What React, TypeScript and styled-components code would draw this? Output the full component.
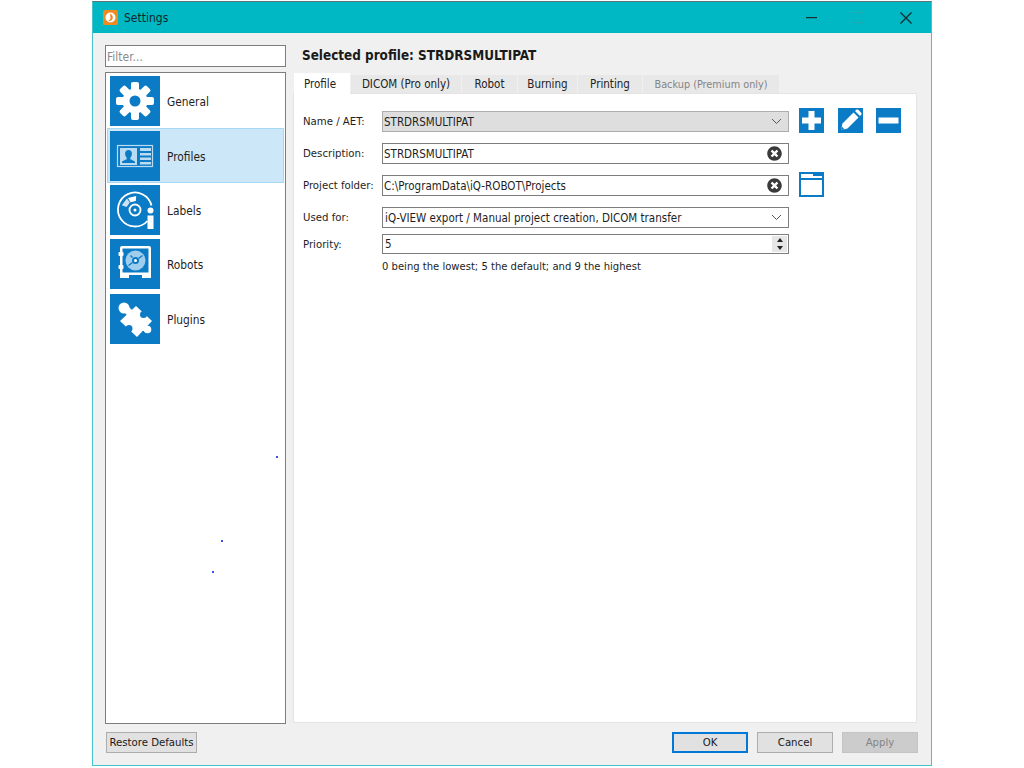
import styled, { createGlobalStyle } from "styled-components";
import { FaTimesCircle } from "react-icons/fa";
import type { ReactNode } from "react";

const GlobalStyle = createGlobalStyle`
  html, body {
    margin: 0;
    background: #ffffff;
  }
  body {
    font-family: "DejaVu Sans", "Liberation Sans", sans-serif;
    font-stretch: condensed;
    font-size: 11.3px;
    color: #1e1e1e;
    overflow: hidden;
  }
`

const Window = styled.div`
  display: flex;
  flex-direction: column;
  box-sizing: border-box;
  width: 840px;
  height: 765px;
  margin: 1px 0 0 92px;
  border: 1px solid #45c1ca;
  border-top-color: #5d7276;
  background: #f0f0f0;
`

const TitleBar = styled.div`
  display: flex;
  align-items: center;
  flex: none;
  height: 31px;
  padding: 0 1px 0 10px;
  background: #00b8c4;
`

const AppIcon = styled.svg`
  width: 15px;
  height: 15px;
  margin-right: 6px;
`

const Title = styled.span`
  flex: 1;
  font-size: 12px;
  color: #10282c;
`

const WinControl = styled.div`
  display: flex;
  align-items: center;
  justify-content: center;
  width: 47.5px;
  height: 31px;
`

const Body = styled.div`
  display: flex;
  flex-direction: column;
  flex: 1;
  min-height: 0;
  padding: 12px 13px 12px 12px;
`

const MainRow = styled.div`
  display: grid;
  grid-template-columns: 181px 1fr;
  column-gap: 7px;
  flex: 1;
  min-height: 0;
`

const Sidebar = styled.div`
  display: flex;
  flex-direction: column;
  gap: 5px;
  min-height: 0;
`

const FilterInput = styled.input`
  flex: none;
  box-sizing: border-box;
  width: 181px;
  height: 22px;
  padding: 1px 1px 0;
  border: 1px solid #7d7d7d;
  background: #fff;
  font: inherit;
  font-stretch: condensed;
  font-size: 12px;
  outline: none;

  &::placeholder {
    color: #8a8a8a;
    opacity: 1;
  }
`

const NavList = styled.div`
  position: relative;
  flex: 1;
  padding: 1px;
  border: 1px solid #7d7d7d;
  background: #fff;
`

const NavItem = styled.div<{ $selected?: boolean }>`
  display: flex;
  align-items: center;
  gap: 7px;
  box-sizing: border-box;
  height: 54.4px;
  padding-left: 2px;
  border: 1px solid ${(p) => (p.$selected ? "#a6d8f5" : "transparent")};
  background: ${(p) => (p.$selected ? "#cce8f8" : "transparent")};
  font-size: 11.8px;
`

const NavName = styled.span`
  margin-top: 2px;
`

const Tile = styled.div`
  display: flex;
  align-items: center;
  justify-content: center;
  flex: none;
  width: 50px;
  height: 50px;
  background: #0b7bc6;
  color: #fff;
`

const Speck = styled.span<{ $x: number; $y: number }>`
  position: absolute;
  left: ${(p) => p.$x}px;
  top: ${(p) => p.$y}px;
  width: 2px;
  height: 2px;
  background: #3d4fe0;
`

const Content = styled.div`
  display: flex;
  flex-direction: column;
  min-height: 0;
  padding: 0 1px 1px 0;
`

const Heading = styled.h2`
  flex: none;
  height: 28px;
  margin: 0;
  padding-left: 9px;
  font-size: 13.4px;
  font-weight: 700;
  line-height: 21px;
  color: #1a1a1a;
`

const TabBar = styled.div`
  display: flex;
  flex: none;
  align-items: flex-end;
  height: 20px;
  padding-left: 1px;
  gap: 1px;
`

const Tab = styled.div<{ $active?: boolean; $disabled?: boolean; $width: number }>`
  display: flex;
  align-items: center;
  justify-content: center;
  box-sizing: border-box;
  width: ${(p) => p.$width}px;
  height: ${(p) => (p.$active ? "21px" : "18px")};
  margin-bottom: ${(p) => (p.$active ? "-1px" : "0")};
  padding-right: ${(p) => (p.$active ? "4px" : "0")};
  background: ${(p) => (p.$active ? "#fff" : "#e8e8e8")};
  color: ${(p) => (p.$disabled ? "#858585" : "#222")};
  position: relative;
  font-size: ${(p) => (p.$disabled ? "10.8px" : "11.5px")};
`

const Pane = styled.div`
  flex: 1;
  padding: 15px 0 0 9px;
  border: 1px solid #e4e4e4;
  background: #fff;
`

const FormRow = styled.div<{ $gap?: number; $height: number }>`
  display: flex;
  align-items: center;
  height: ${(p) => p.$height}px;
  margin-top: ${(p) => p.$gap ?? 0}px;
`

const Label = styled.label`
  flex: none;
  width: 79px;
`

const Field = styled.div<{ $disabled?: boolean; $height?: number; $inset?: number }>`
  display: flex;
  align-items: center;
  flex: none;
  box-sizing: border-box;
  width: 407px;
  height: ${(p) => p.$height ?? 21}px;
  padding: 0 6px 0 ${(p) => p.$inset ?? 1}px;
  border: 1px solid ${(p) => (p.$disabled ? "#adadad" : "#7d7d7d")};
  background: ${(p) => (p.$disabled ? "#dedede" : "#fff")};
  font-size: 11.5px;
`

const FieldText = styled.span`
  flex: 1;
`

const ClearIcon = styled(FaTimesCircle)`
  width: 15px;
  height: 15px;
  color: #3a3a3a;
`

const Spinner = styled.div`
  display: flex;
  flex-direction: column;
  align-items: center;
  justify-content: space-between;
  box-sizing: border-box;
  width: 15px;
  height: 16px;
  margin-right: -5px;
  padding: 2px 0;
  background: #e6e6e6;
`

const Arrow = styled.span<{ $down?: boolean }>`
  width: 0;
  height: 0;
  border-left: 3.5px solid transparent;
  border-right: 3.5px solid transparent;
  ${(p) => (p.$down ? "border-top: 4px solid #222;" : "border-bottom: 4px solid #222;")}
`

const Hint = styled.div`
  margin: 5px 0 0 79px;
  font-size: 11.15px;
  line-height: 15px;
`

const Actions = styled.div`
  display: flex;
  gap: 13.5px;
  margin: -1px 0 1px 10px;
`

const ActionButton = styled.div<{ $outline?: boolean }>`
  display: flex;
  align-items: center;
  justify-content: center;
  width: 25px;
  height: 25px;
  background: ${(p) => (p.$outline ? "transparent" : "#0b7bc6")};
  color: #fff;
`

const Footer = styled.div`
  display: flex;
  flex: none;
  align-items: center;
  gap: 9px;
  margin-top: 8px;
  padding-left: 1px;
`

const Button = styled.button<{ $width: number; $primary?: boolean }>`
  box-sizing: border-box;
  width: ${(p) => p.$width}px;
  height: 21px;
  padding: 0;
  border: ${(p) => (p.$primary ? "2px solid #0078d7" : "1px solid #adadad")};
  background: #e1e1e1;
  font: inherit;
  font-stretch: condensed;
  font-size: 11.3px;
  white-space: nowrap;
  color: #1a1a1a;

  &:disabled {
    border-color: #c4c4c4;
    background: #cccccc;
    color: #848484;
  }
`

const FooterSpacer = styled.div`
  flex: 1;
`

function Chevron() {
  return (
    <svg width="11" height="7" viewBox="0 0 11 7" fill="none" stroke="#555" strokeWidth="1">
      <path d="M1 1l4.500 4.500L10 1" />
    </svg>
  )
}

function GearGlyph() {
  return (
    <svg width="50" height="50" viewBox="0 0 50 50">
      {[0, 45, 90, 135, 180, 225, 270, 315].map((deg) => (
        <rect key={deg} x="21" y="6" width="8" height="12" rx="2" fill="#fff" transform={`rotate(${deg} 25 25)`} />
      ))}
      <circle cx="25" cy="25" r="12.500" fill="#fff" />
      <circle cx="25" cy="25" r="5.500" fill="#0b7bc6" />
    </svg>
  )
}

function ProfileGlyph() {
  return (
    <svg width="50" height="50" viewBox="0 0 50 50">
      <rect x="7.500" y="14.500" width="35" height="21" fill="none" stroke="#b9dcf3" strokeWidth="1.200" />
      <path
        fill="#b9dcf3"
        fillRule="evenodd"
        d="M10 17h17v17H10zM18.500 19c-2.400 0-3.600 1.800-3.400 4 .1 1.500.8 3 1.600 3.800v1.400c-1.800.8-3.700 1.400-4.700 2.600v1.200h13v-1.200c-1-1.200-2.900-1.800-4.700-2.600v-1.400c.8-.8 1.500-2.300 1.600-3.800.2-2.200-1-4-3.400-4z"
      />
      <path fill="#b9dcf3" d="M30 17h11v3H30zM30 22h11v2.500H30zM30 26.500h11V29H30zM30 31h11v2.500H30z" />
    </svg>
  )
}

function LabelsGlyph() {
  return (
    <svg width="50" height="50" viewBox="0 0 50 50">
      <path fill="none" stroke="#fff" strokeWidth="1.800" d="M37.500 36A17 17 0 1 1 41.500 20.500" />
      <circle cx="25" cy="25" r="5.500" fill="none" stroke="#fff" strokeWidth="1.800" />
      <circle cx="25" cy="25" r="1.500" fill="#fff" />
      <path fill="#fff" opacity="0.8" d="M16.500 21.900L19.800 17.600 17 13.500 11.800 20.200z" />
      <path fill="#fff" d="M20.500 17.200L25.800 16 26.200 11.100 18 12.900z" />
      <circle cx="40.500" cy="25.500" r="3" fill="#fff" />
      <rect x="37.500" y="30.500" width="6" height="13.500" fill="#fff" />
    </svg>
  )
}

function RobotsGlyph() {
  return (
    <svg width="50" height="50" viewBox="0 0 50 50">
      <path
        fill="#fff"
        fillRule="evenodd"
        d="M12 7h27a2 2 0 0 1 2 2v30h-9v-3H19v3h-9V9a2 2 0 0 1 2-2zM12.500 9.500v24h26v-24z"
      />
      <rect x="8.500" y="13" width="5" height="4" rx="1" fill="#fff" />
      <rect x="8.500" y="26" width="5" height="4" rx="1" fill="#fff" />
      <circle cx="25.500" cy="21.500" r="10" fill="#9fcdee" />
      <circle cx="25.500" cy="21.500" r="3.500" fill="#0b7bc6" />
      <circle cx="25.500" cy="21.500" r="1.500" fill="#fff" />
      <path stroke="#0b7bc6" strokeWidth="1.300" fill="none" d="M18.500 26.500l4-3M28.500 19.500l4-3M20.500 16.500l2 2" />
    </svg>
  )
}

function PuzzleGlyph() {
  return (
    <svg width="50" height="50" viewBox="0 0 50 50">
      <path fill="#fff" d="M26 12L42 27 27 43 10 27zM12 16L17 11 22 16 17 21z" />
      <circle cx="14" cy="14" r="5.500" fill="#fff" />
      <path fill="#fff" d="M33 30l4 2 1 4-5 1z" />
      <circle cx="37.500" cy="35.500" r="3.800" fill="#fff" />
      <circle cx="33.500" cy="20.500" r="3.500" fill="#0b7bc6" />
      <circle cx="19" cy="34.500" r="3.500" fill="#0b7bc6" />
    </svg>
  )
}

function PlusGlyph() {
  return (
    <svg width="25" height="25" viewBox="0 0 25 25">
      <path fill="#fff" d="M9.500 3h6v6.500H22v6h-6.500V22h-6v-6.500H3v-6h6.500z" />
    </svg>
  )
}

function MinusGlyph() {
  return (
    <svg width="25" height="25" viewBox="0 0 25 25">
      <rect x="2.500" y="9.500" width="20" height="6" fill="#fff" />
    </svg>
  )
}

function PencilGlyph() {
  return (
    <svg width="25" height="25" viewBox="0 0 25 25">
      <path fill="#fff" d="M3 22l1.500-6.500L15.500 4.500l5 5L9.500 20.500z" />
      <path fill="#fff" d="M17 3l1.300-1.200c.6-.5 1.400-.5 2 0l2.900 2.900c.5.600.5 1.400 0 2L22 8z" />
      <path fill="#0b7bc6" d="M3 22l.8-3.500 2.700 2.700z" />
    </svg>
  )
}

function FolderGlyph() {
  return (
    <svg width="25" height="25" viewBox="0 0 25 25">
      <path
        fill="#0b7bc6"
        fillRule="evenodd"
        d="M0 0h25v25H0zM2 2v4h21V4H14V2zM2 8v15h21V8z"
      />
    </svg>
  )
}

function NavEntry({ name, icon, selected }: { name: string; icon: ReactNode; selected?: boolean }) {
  return (
    <NavItem $selected={selected}>
      <Tile>{icon}</Tile>
      <NavName>{name}</NavName>
    </NavItem>
  )
}

export default function App() {
  return (
    <>
      <GlobalStyle />
      <Window>
        <TitleBar>
          <AppIcon viewBox="0 0 15 15">
            <rect width="15" height="15" rx="1.500" fill="#ee8a1e" />
            <circle cx="7.500" cy="7.500" r="5" fill="#fff" />
            <path fill="#f0861c" d="M7 3.500c2 1 3.500 3 2.500 5.500-.8 1.800-3 2.500-4.500 1.500 1.500 0 2.500-1 2.500-2.500S7 5 7 3.500z" />
          </AppIcon>
          <Title>Settings</Title>
          <WinControl>
            <svg width="11" height="2"><rect width="11" height="1.200" fill="#1c2c2e" /></svg>
          </WinControl>
          <WinControl>
            <svg width="11" height="11"><rect x="0.500" y="0.500" width="10" height="10" fill="none" stroke="#22a6b0" /></svg>
          </WinControl>
          <WinControl>
            <svg width="12" height="12" stroke="#14282a" strokeWidth="1.200"><path d="M0.500 0.500l11 11M11.500 0.500l-11 11" /></svg>
          </WinControl>
        </TitleBar>
        <Body>
          <MainRow>
            <Sidebar>
              <FilterInput placeholder="Filter..." readOnly />
              <NavList>
                <NavEntry name="General" icon={<GearGlyph />} />
                <NavEntry name="Profiles" icon={<ProfileGlyph />} selected />
                <NavEntry name="Labels" icon={<LabelsGlyph />} />
                <NavEntry name="Robots" icon={<RobotsGlyph />} />
                <NavEntry name="Plugins" icon={<PuzzleGlyph />} />
                <Speck $x={170} $y={383} />
                <Speck $x={115} $y={467} />
                <Speck $x={106} $y={498} />
              </NavList>
            </Sidebar>
            <Content>
              <Heading>Selected profile: STRDRSMULTIPAT</Heading>
              <TabBar>
                <Tab $active $width={56}>Profile</Tab>
                <Tab $width={110}>DICOM (Pro only)</Tab>
                <Tab $width={55}>Robot</Tab>
                <Tab $width={59}>Burning</Tab>
                <Tab $width={64}>Printing</Tab>
                <Tab $disabled $width={136}>Backup (Premium only)</Tab>
              </TabBar>
              <Pane>
                <FormRow $height={25}>
                  <Label>Name / AET:</Label>
                  <Field $disabled>
                    <FieldText>STRDRSMULTIPAT</FieldText>
                    <Chevron />
                  </Field>
                  <Actions>
                    <ActionButton><PlusGlyph /></ActionButton>
                    <ActionButton><PencilGlyph /></ActionButton>
                    <ActionButton><MinusGlyph /></ActionButton>
                  </Actions>
                </FormRow>
                <FormRow $gap={9} $height={21}>
                  <Label>Description:</Label>
                  <Field>
                    <FieldText>STRDRSMULTIPAT</FieldText>
                    <ClearIcon />
                  </Field>
                </FormRow>
                <FormRow $gap={9} $height={25}>
                  <Label>Project folder:</Label>
                  <Field>
                    <FieldText>C:\ProgramData\iQ-ROBOT\Projects</FieldText>
                    <ClearIcon />
                  </Field>
                  <Actions>
                    <ActionButton $outline><FolderGlyph /></ActionButton>
                  </Actions>
                </FormRow>
                <FormRow $gap={9} $height={21}>
                  <Label>Used for:</Label>
                  <Field $inset={2}>
                    <FieldText>iQ-VIEW export / Manual project creation, DICOM transfer</FieldText>
                    <Chevron />
                  </Field>
                </FormRow>
                <FormRow $gap={6} $height={20}>
                  <Label>Priority:</Label>
                  <Field $height={20} $inset={2}>
                    <FieldText>5</FieldText>
                    <Spinner>
                      <Arrow />
                      <Arrow $down />
                    </Spinner>
                  </Field>
                </FormRow>
                <Hint>0 being the lowest; 5 the default; and 9 the highest</Hint>
              </Pane>
            </Content>
          </MainRow>
          <Footer>
            <Button $width={91}>Restore Defaults</Button>
            <FooterSpacer />
            <Button $width={76} $primary>OK</Button>
            <Button $width={76}>Cancel</Button>
            <Button $width={76} disabled>Apply</Button>
          </Footer>
        </Body>
      </Window>
    </>
  )
}
